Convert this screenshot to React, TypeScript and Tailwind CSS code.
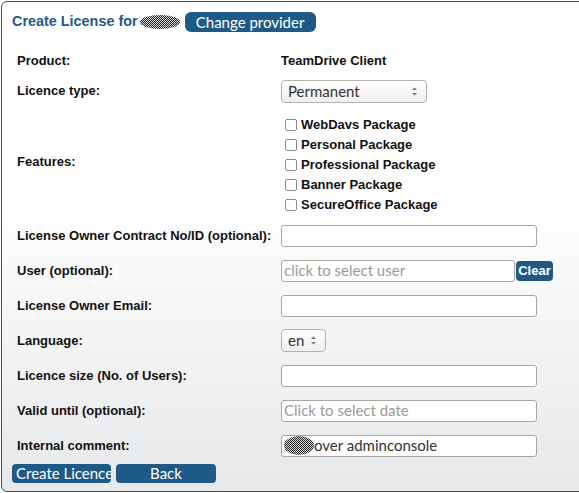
import React from 'react';

const uiFont = "font-['Lato','Open_Sans',sans-serif]";
const labelFont = "font-['Liberation_Sans',Arial,sans-serif]";

const Blob: React.FC<{ w: number; h: number; id: string }> = ({ w, h, id }) => (
  <svg width={w} height={h} className="shrink-0">
    <defs>
      <pattern id={id} width="2" height="2" patternUnits="userSpaceOnUse">
        <rect width="2" height="2" fill="#d8d8d8" />
        <rect width="1" height="1" fill="#222" />
        <rect x="1" y="1" width="1" height="1" fill="#222" />
      </pattern>
    </defs>
    <ellipse cx={w / 2} cy={h / 2} rx={w / 2} ry={h / 2} fill={`url(#${id})`} />
  </svg>
);

const SpinArrows = () => (
  <svg width="7" height="11" viewBox="0 0 7 11" className="shrink-0">
    <path d="M1 4 L3.5 1.5 L6 4 Z" fill="#777" />
    <path d="M1 7 L3.5 9.5 L6 7 Z" fill="#777" />
  </svg>
);

const TextInput: React.FC<{ placeholder?: string; value?: React.ReactNode; w?: string }> = ({ placeholder, value, w = 'w-[256px]' }) => (
  <div className={`${w} h-[22px] border border-[#a8a6a2] rounded-[3px] bg-white flex items-center px-[2px] text-[15px] ${uiFont} overflow-hidden whitespace-nowrap`}>
    {value ? <span className="text-[#333] flex items-center">{value}</span> : <span className="text-[#9a9a9a]">{placeholder}</span>}
  </div>
);

const FakeSelect: React.FC<{ label: string; w: string }> = ({ label, w }) => (
  <div className={`${w} h-[23px] border border-[#b5b3af] rounded-[4px] bg-gradient-to-b from-white to-[#f0efed] flex items-center justify-between pl-[6px] pr-[8px] text-[15px] text-[#333] ${uiFont}`}>
    <span>{label}</span>
    <SpinArrows />
  </div>
);

const Row: React.FC<{ label: string; h?: string; children: React.ReactNode }> = ({ label, h = 'h-[35px]', children }) => (
  <div className={`flex items-center ${h}`}>
    <div className={`w-[269px] pl-[5px] text-[13px] font-bold text-[#111] ${labelFont}`}>{label}</div>
    <div className="flex items-center">{children}</div>
  </div>
);

const features = ['WebDavs Package', 'Personal Package', 'Professional Package', 'Banner Package', 'SecureOffice Package'];

export default function App() {
  return (
    <div className="w-[579px] h-[493px] overflow-hidden bg-white">
      <div className="ml-px mt-px w-[640px] h-[491px] border border-[#1f5a86] rounded-[6px] bg-gradient-to-b from-white from-40% to-[#e7e8ea] pl-[10px] pt-[10px]">
        <div className="flex items-center h-[20px]">
          <span className={`text-[14.4px] font-bold text-[#245a87] ${labelFont}`}>Create License for</span>
          <span className="ml-[2px]"><Blob w={40} h={14} id="b1" /></span>
          <button className={`ml-[5px] h-[20px] w-[131px] rounded-[6px] bg-[#1f5a86] text-white text-[15px] leading-none ${uiFont}`}>Change provider</button>
        </div>

        <div className="mt-[14px]">
          <Row label="Product:" h="h-[30px]">
            <span className={`text-[13px] font-bold text-[#111] ${labelFont}`}>TeamDrive Client</span>
          </Row>
          <Row label="Licence type:" h="h-[30px]">
            <FakeSelect label="Permanent" w="w-[146px]" />
          </Row>
          <div className="flex h-[112px]">
            <div className={`w-[269px] pl-[5px] self-center text-[13px] font-bold text-[#111] ${labelFont}`}>Features:</div>
            <div className="pt-[9px] flex flex-col">
              {features.map(f => (
                <div key={f} className="flex items-center h-[20px]">
                  <span className="ml-[4px] w-[12px] h-[12px] border border-[#8a8a8a] rounded-[2px] bg-white" />
                  <span className={`ml-[4px] text-[13px] font-bold text-[#111] ${labelFont}`}>{f}</span>
                </div>
              ))}
            </div>
          </div>
          <Row label="License Owner Contract No/ID (optional):">
            <TextInput />
          </Row>
          <Row label="User (optional):">
            <TextInput w="w-[234px]" placeholder="click to select user" />
            <button className={`ml-[1px] h-[20px] w-[37px] rounded-[4px] bg-[#1f5a86] text-white text-[13px] font-bold ${labelFont}`}>Clear</button>
          </Row>
          <Row label="License Owner Email:">
            <TextInput />
          </Row>
          <Row label="Language:">
            <FakeSelect label="en" w="w-[45px]" />
          </Row>
          <Row label="Licence size (No. of Users):">
            <TextInput />
          </Row>
          <Row label="Valid until (optional):">
            <TextInput placeholder="Click to select date" />
          </Row>
          <Row label="Internal comment:">
            <TextInput value={<><Blob w={30} h={19} id="b2" /><span>over adminconsole</span></>} />
          </Row>
        </div>

        <div className={`flex gap-[5px] mt-[1px] ${uiFont}`}>
          <button className="w-[99px] h-[19px] rounded-[4px] bg-[#1f5a86] text-white text-[15px] leading-none overflow-hidden whitespace-nowrap text-left pl-[4px]">Create Licence</button>
          <button className="w-[100px] h-[19px] rounded-[4px] bg-[#1f5a86] text-white text-[15px] leading-none">Back</button>
        </div>
      </div>
    </div>
  );
}
